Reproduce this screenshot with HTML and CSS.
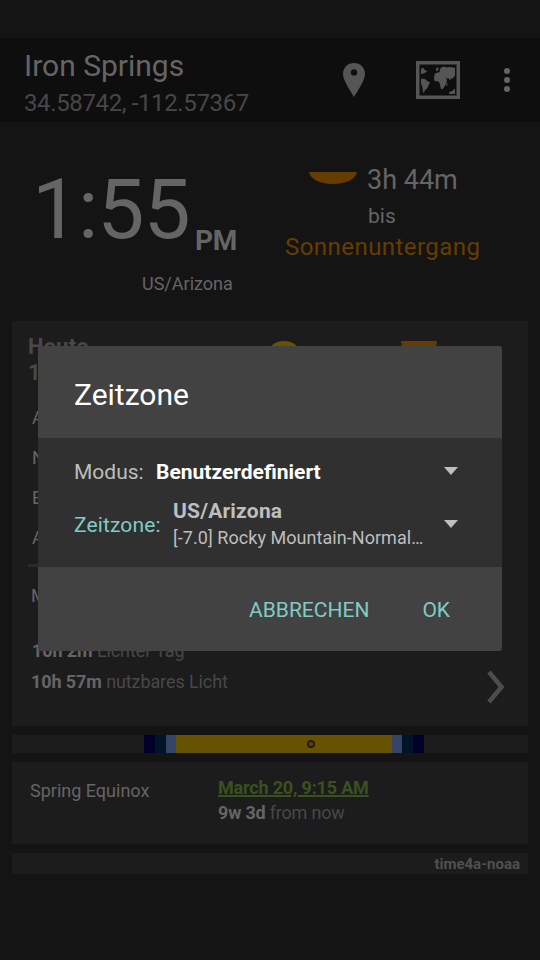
FILE: index.html
```
<!DOCTYPE html>
<html lang="de">
<head>
<meta charset="utf-8">
<title>Zeitzone</title>
<link rel="stylesheet" href="styles.css">
</head>
<body>
<div class="screen">
  <header class="toolbar">
    <div class="place">
      <div class="place-name">Iron Springs</div>
      <div class="place-coords">34.58742, -112.57367</div>
    </div>
    <svg class="pin" width="22" height="34" viewBox="0 0 22 34"><path fill-rule="evenodd" d="M11 0C4.800 0 0 4.600 0 11c0 5.500 5.200 13.400 11 23 5.800-9.600 11-17.500 11-23C22 4.600 17.200 0 11 0zm0 6.200a3.200 3.200 0 1 1 0 6.400 3.200 3.200 0 0 1 0-6.400z"/></svg>
    <svg class="map" width="44" height="38" viewBox="0 0 44 38">
      <path fill-rule="evenodd" d="M0 0h44v38H0zM3.500 3.500v31h37v-31z"/>
      <path d="M5 8l2-1.500 1 1.500 1.500 1.500 2 .5-2 1.500-2 1L5 13zM5 18l1.500-.5 3 .7 1.500 1.800 3 1.500-1.500 3-1.500 3-2 1.500-1 2.500H7l-.5-5L5 22.500zM20 8l1-1.500 2 .5-1.500 3h-1.500zM24 8l2-2 3-.5 1 1 3-.5 6 .8V15l-1.500 1-.5 2-1.500-1-1.500 2.500-1.500-2.500-1.500 1-1.500-2 1.500 4-1 3-1.500 2.500-1.500 2.500h-2l-1.500-6-1-1.500-4-.5L18 17.500l.5-4L20 12l2.500-.5L24 10zM30.500 22.500l1.200 0-.7 2.500-.8-.5zM32.500 31.500l3.500-1.500 3-2.500V33h-5z"/>
    </svg>
    <svg class="more" width="6" height="24" viewBox="0 0 6 24"><circle cx="3" cy="3" r="3"/><circle cx="3" cy="12" r="3"/><circle cx="3" cy="21" r="3"/></svg>
  </header>

  <section class="now">
    <div class="clock">
      <div class="clock-row"><span class="time">1:55</span><span class="ampm">PM</span></div>
      <div class="zone">US/Arizona</div>
    </div>
    <div class="next">
      <div class="next-row">
        <svg class="setting" width="48" height="12" viewBox="0 0 48 12"><path d="M0 0h48C47 7 37 12 24 12S1 7 0 0z"/></svg>
        <span class="remaining">3h 44m</span>
      </div>
      <div class="until">bis</div>
      <div class="event">Sonnenuntergang</div>
    </div>
  </section>

  <section class="card today">
    <div class="today-head">
      <div class="today-date"><div>Heute</div><div>15.</div></div>
      <svg class="rise" width="36" height="18" viewBox="0 0 36 18"><path d="M0 18C1 7 7 0 18 0s17 7 18 18z"/></svg>
      <svg class="set" width="36" height="18" viewBox="0 0 36 18"><path d="M0 0h36c-1 11-8 18-18 18S1 11 0 0z"/></svg>
    </div>
    <div class="rows">
      <div>A</div><div>N</div><div>B</div><div>A</div>
    </div>
    <div class="rule"></div>
    <div class="noon">M</div>
    <div class="lengths">
      <div class="lengths-text">
        <div class="day"><b>10h 2m</b> Lichter Tag</div>
        <div class="light"><b>10h 57m</b> nutzbares Licht</div>
      </div>
      <svg class="chevron" width="20" height="34" viewBox="0 0 20 34"><path d="M3 2l12.500 15L3 32"/></svg>
    </div>
  </section>

  <section class="daybar">
    <i class="astro"></i><i class="naut"></i><i class="civil"></i>
    <i class="sun"><svg class="marker" width="10" height="10" viewBox="0 0 10 10"><circle cx="5" cy="5" r="3.200"/></svg></i>
    <i class="civil"></i><i class="naut"></i><i class="astro"></i>
  </section>

  <section class="card equinox">
    <div class="eq-name">Spring Equinox</div>
    <div class="eq-when">
      <div class="eq-date">March 20, 9:15 AM</div>
      <div class="eq-left"><b>9w 3d</b> from now</div>
    </div>
  </section>
  <footer class="card source">time4a-noaa</footer>

  <div class="dialog" role="dialog">
    <h1>Zeitzone</h1>
    <div class="fields">
      <div class="field mode">
        <span class="label">Modus:</span>
        <span class="mode-value">Benutzerdefiniert</span>
        <svg class="caret" width="14" height="8" viewBox="0 0 14 8"><path d="M0 0h14L7 8z"/></svg>
      </div>
      <div class="field tz">
        <span class="label accent">Zeitzone:</span>
        <div class="tz-value">
          <div class="tz-id">US/Arizona</div>
          <div class="tz-name">[-7.0] Rocky Mountain-Normal…</div>
        </div>
        <svg class="caret" width="14" height="8" viewBox="0 0 14 8"><path d="M0 0h14L7 8z"/></svg>
      </div>
    </div>
    <div class="actions"><span class="cancel">ABBRECHEN</span><span class="ok">OK</span></div>
  </div>
</div>
</body>
</html>
```
FILE: styles.css
```
* { box-sizing: border-box; }
body { margin: 0; background: #141414; }
.screen {
  position: relative;
  width: 540px;
  height: 960px;
  padding-top: 38px;
  overflow: hidden;
  background: #141414;
  color: #656565;
  font-family: Roboto, "Noto Sans", sans-serif;
  font-size: 18px;
  white-space: nowrap;
}
svg { display: block; flex: none; fill: #555; }

.toolbar { display: flex; height: 84px; padding-left: 24px; background: #0e0e0e; }
.place { width: 319px; padding-top: 10px; }
.place-name { font-size: 30px; line-height: 36px; }
.place-coords { margin-top: 5px; font-size: 24px; line-height: 28px; letter-spacing: -.37px; color: #474747; }
.pin { margin-top: 25px; }
.map { margin: 23px 0 0 51px; }
.more { margin: 30px 0 0 44px; fill: #656565; }

.now { display: flex; height: 199px; }
.clock { width: 270px; }
.clock-row { display: flex; height: 140px; padding-left: 32px; }
.time { width: 163px; padding-top: 39px; font-size: 84px; line-height: 98px; letter-spacing: -1.100px; }
.ampm { padding-top: 103px; font-size: 28px; line-height: 32px; font-weight: 700; letter-spacing: -.3px; }
.zone { padding: 11px 0 0 142px; line-height: 22px; }
.next { padding-top: 41px; }
.next-row { display: flex; padding-left: 39px; }
.setting { margin-top: 9px; fill: #663d00; }
.remaining { padding-left: 10px; font-size: 27px; line-height: 34px; }
.until { margin: 7px 0 0 98px; font-size: 21px; line-height: 24px; }
.event { margin: 4px 0 0 15px; font-size: 24px; line-height: 30px; letter-spacing: .45px; color: #663d00; }

.card { margin: 0 12px; background: #1c1c1c; }
.today { height: 405px; }
.today-head { display: flex; height: 77px; padding: 13px 0 0 16px; }
.today-date { width: 238px; font-size: 22px; line-height: 26px; font-weight: 700; letter-spacing: .3px; color: #484848; }
.rise { margin-top: 7px; fill: #665200; }
.set { margin: 7px 0 0 99px; fill: #663d00; }
.rows { padding: 0 0 0 20px; line-height: 40px; }
.rule { width: 470px; height: 3px; margin: 6px 0 0 16px; background: #2a2a2a; }
.noon { margin-left: 19px; padding-top: 9px; line-height: 40px; }
.lengths { display: flex; padding: 19px 0 0 19px; color: #484848; }
.lengths-text { width: 455px; line-height: 31px; letter-spacing: -.1px; }
.day { padding-left: 1px; }
.lengths b { color: #656565; }
.chevron { margin-top: 35px; fill: none; stroke: #4d4d4d; stroke-width: 4.500px; }

.daybar { display: flex; height: 18px; margin: 9px 12px; padding-left: 132px; background: #1c1c1c; }
.astro { width: 11px; background: #000028; }
.naut { width: 11px; background: #001428; }
.civil { width: 10px; background: #334466; }
.sun { width: 216px; padding: 4px 0 0 130px; background: #665200; }
.marker { fill: #663d00; stroke: #1c1c1c; stroke-width: 1.800px; }

.equinox { display: flex; height: 82px; padding: 14px 0 0 18px; }
.eq-name { width: 188px; padding-top: 4px; line-height: 22px; }
.eq-when { color: #484848; }
.eq-date { width: 151px; line-height: 24px; font-weight: 700; letter-spacing: -.18px; color: #38521e; text-decoration: underline; text-decoration-thickness: 2px; text-underline-offset: 1px; }
.eq-left { line-height: 26px; letter-spacing: -.2px; }
.eq-left b { color: #656565; }
.source { height: 21px; margin-top: 9px; padding-right: 8px; font-size: 15px; line-height: 22px; font-weight: 700; text-align: right; color: #505050; }

.dialog { position: absolute; left: 38px; top: 346px; width: 464px; height: 305px; border-radius: 3px; background: #424242; color: #bebebe; }
.dialog h1 { height: 92px; margin: 0; padding: 31px 0 0 36px; font-size: 30px; line-height: 36px; font-weight: 400; color: #fff; }
.fields { height: 129px; padding: 20px 44px 0 36px; background: #303030; }
.field { display: flex; align-items: flex-start; font-size: 21px; }
.label { width: 82px; line-height: 28px; }
.mode-value { line-height: 28px; font-weight: 700; color: #fff; }
.caret { margin: 9px 0 0 auto; fill: #bebebe; }
.tz { margin-top: 11px; }
.tz .label { width: 99px; margin-top: 14px; letter-spacing: .12px; }
.accent { color: #80cbc4; }
.tz-id { line-height: 28px; font-weight: 700; letter-spacing: .2px; }
.tz-name { font-size: 18px; line-height: 26px; letter-spacing: .05px; }
.tz .caret { margin-top: 23px; }
.actions { display: flex; justify-content: flex-end; gap: 52px; padding: 29px 52px 0 0; font-size: 21px; line-height: 28px; color: #80cbc4; }
.cancel { margin-right: 1px; }
```
